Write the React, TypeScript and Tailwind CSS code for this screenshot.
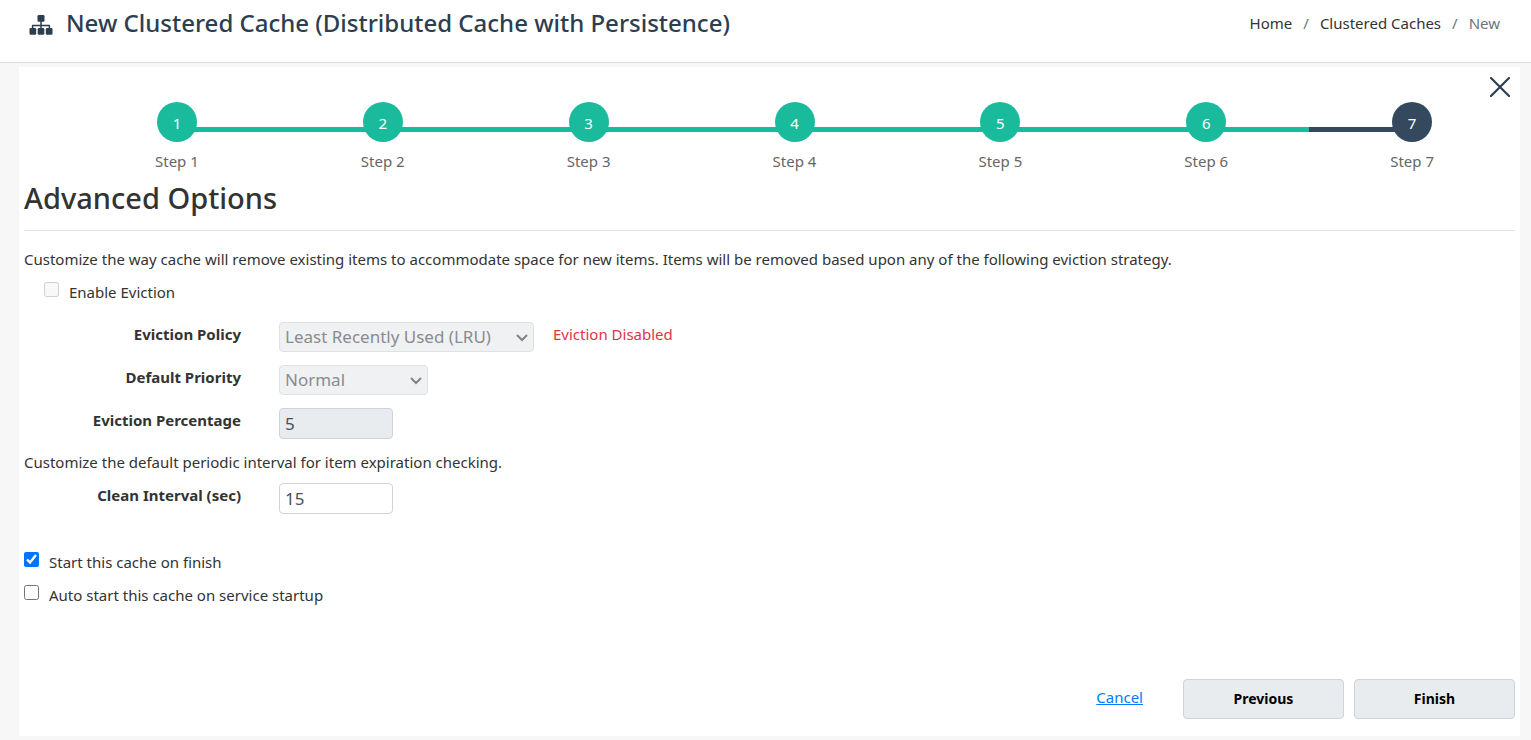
import { useState } from "react";
import type { ReactNode } from "react";

const STEPS = [1, 2, 3, 4, 5, 6, 7];
const CURRENT_STEP = 7;

function SitemapIcon() {
  return (
    <svg viewBox="0 0 24 20" className="h-5 w-6" fill="#2c3e50" aria-hidden="true">
      <rect x="8.5" y="0" width="7" height="6.8" rx="1.2" />
      <rect x="0.5" y="13" width="6.7" height="6.8" rx="1.2" />
      <rect x="8.7" y="13" width="6.6" height="6.8" rx="1.2" />
      <rect x="16.8" y="13" width="6.7" height="6.8" rx="1.2" />
      <path d="M12 6v8M3.6 13.5V10.4H20.4V13.5" fill="none" stroke="#2c3e50" strokeWidth="1.5" strokeLinejoin="round" />
    </svg>
  );
}

function CloseIcon() {
  return (
    <svg viewBox="0 0 20 20" className="size-5" fill="none" stroke="#2c3e50" strokeWidth="2.2" strokeLinecap="round" aria-hidden="true">
      <path d="M1 1 19 19M19 1 1 19" />
    </svg>
  );
}

function Step({ step }: { step: number }) {
  const color = step === CURRENT_STEP ? "bg-[#34495e]" : "bg-[#1abb9c]";
  return (
    <li className="flex-1" aria-current={step === CURRENT_STEP ? "step" : undefined}>
      <div className="flex items-end">
        <span className={`mb-[10px] -mr-1 h-[5px] flex-1 ${step === 1 ? "invisible" : ""} ${color}`} />
        <span className={`flex size-10 items-center justify-center rounded-full pt-0.5 text-white ${color}`}>{step}</span>
        <span className={`mb-[10px] -ml-1 h-[5px] flex-1 ${step === STEPS.length ? "invisible" : ""} ${color}`} />
      </div>
      <div className="mt-2 text-center text-[#666666]">Step {step}</div>
    </li>
  );
}

function Field({ id, label, children }: { id: string; label: string; children: ReactNode }) {
  return (
    <div className="flex items-start">
      <label htmlFor={id} className="w-[217px] shrink-0 pt-px text-right font-bold">
        {label}
      </label>
      <div className="flex items-start gap-[19px] pl-[38px]">{children}</div>
    </div>
  );
}

const SELECT =
  "h-full w-full appearance-none rounded border border-[#dee2e6] bg-[#f0f1f3] pl-[5px] pr-7 text-[17px] leading-7 text-[#888c90]";
const INPUT = "h-[31px] w-[114px] rounded border border-[#ced4da] px-[5px] text-[17px] text-[#495057]";

function DisabledSelect({ id, option, width }: { id: string; option: string; width: string }) {
  return (
    <div className={`relative h-[30px] ${width}`}>
      <select id={id} disabled className={SELECT}>
        <option>{option}</option>
      </select>
      <svg
        viewBox="0 0 12 8"
        className="pointer-events-none absolute top-3 right-[6px] h-2 w-3"
        fill="none"
        stroke="#808488"
        strokeWidth="2"
        aria-hidden="true"
      >
        <path d="M1 1 6 6 11 1" />
      </svg>
    </div>
  );
}

interface CheckProps {
  label: string;
  checked: boolean;
  disabled?: boolean;
  onChange?: (checked: boolean) => void;
}

function Check({ label, checked, disabled, onChange }: CheckProps) {
  return (
    <label className="flex h-[22px] w-fit items-start gap-[10px] leading-5">
      <input
        type="checkbox"
        className="size-[15px] accent-[#0075ff]"
        checked={checked}
        disabled={disabled}
        onChange={(e) => onChange?.(e.target.checked)}
      />
      {label}
    </label>
  );
}

export default function App() {
  const [interval, setCleanInterval] = useState("15");
  const [startOnFinish, setStartOnFinish] = useState(true);
  const [autoStart, setAutoStart] = useState(false);

  return (
    <div className="min-h-screen bg-[#f7f7f7] pb-1 font-['Noto_Sans',sans-serif] text-[15px] leading-[22px] text-[#333333]">
      <header className="flex h-[63px] items-start justify-between border-b border-[#d9dee4] bg-white pr-[31px] pl-[29px]">
        <div className="flex items-center gap-[13px] pt-[7px]">
          <div className="pt-1">
            <SitemapIcon />
          </div>
          <h1 className="text-2xl leading-8 font-medium text-[#2c3e50]">
            New Clustered Cache (Distributed Cache with Persistence)
          </h1>
        </div>
        <nav aria-label="Breadcrumb" className="pt-3">
          <ol className="flex gap-[11px]">
            <li>
              <a href="#home">Home</a>
            </li>
            <li className="text-[#6c757d]">/</li>
            <li>
              <a href="#caches">Clustered Caches</a>
            </li>
            <li className="text-[#6c757d]">/</li>
            <li className="text-[#6c757d]">New</li>
          </ol>
        </nav>
      </header>

      <main className="relative mt-1 mr-[11px] ml-[19px] bg-white px-[5px] pt-[35px] pb-[17px]">
        <button type="button" aria-label="Close" className="absolute top-[10px] right-[10px]">
          <CloseIcon />
        </button>

        <ol className="flex pl-[50px]">
          {STEPS.map((step) => (
            <Step key={step} step={step} />
          ))}
        </ol>

        <h2 className="mt-[7px] border-b border-[#e2e3e5] pb-[13px] text-[29px] leading-[38px] font-medium">
          Advanced Options
        </h2>

        <p className="mt-[17px]">
          Customize the way cache will remove existing items to accommodate space for new items. Items will be removed based
          upon any of the following eviction strategy.
        </p>
        <div className="mt-3 pl-5">
          <Check label="Enable Eviction" checked={false} disabled />
        </div>

        <div className="mt-[18px] flex flex-col gap-[13px]">
          <Field id="policy" label="Eviction Policy">
            <DisabledSelect id="policy" option="Least Recently Used (LRU)" width="w-[255px]" />
            <span className="pt-px text-[#dc3545]">Eviction Disabled</span>
          </Field>
          <Field id="priority" label="Default Priority">
            <DisabledSelect id="priority" option="Normal" width="w-[149px]" />
          </Field>
          <Field id="percentage" label="Eviction Percentage">
            <input id="percentage" disabled value="5" className={`${INPUT} bg-[#e9ecef]`} />
          </Field>
        </div>

        <p className="mt-3 mb-[10px]">Customize the default periodic interval for item expiration checking.</p>
        <Field id="interval" label="Clean Interval (sec)">
          <input
            id="interval"
            value={interval}
            onChange={(e) => setCleanInterval(e.target.value)}
            className={`${INPUT} bg-white`}
          />
        </Field>

        <div className="mt-[38px] flex flex-col gap-[11px]">
          <Check label="Start this cache on finish" checked={startOnFinish} onChange={setStartOnFinish} />
          <Check label="Auto start this cache on service startup" checked={autoStart} onChange={setAutoStart} />
        </div>

        <div className="mt-[72px] flex items-start justify-end gap-[10px]">
          <a href="#cancel" className="mr-[30px] pt-[7px] text-[#007bff] underline">
            Cancel
          </a>
          <button type="button" className="h-10 w-[161px] rounded border border-[#ced4da] bg-[#e9ecef] text-sm font-bold text-black">
            Previous
          </button>
          <button type="button" className="h-10 w-[161px] rounded border border-[#ced4da] bg-[#e9ecef] text-sm font-bold text-black">
            Finish
          </button>
        </div>
      </main>
    </div>
  );
}
